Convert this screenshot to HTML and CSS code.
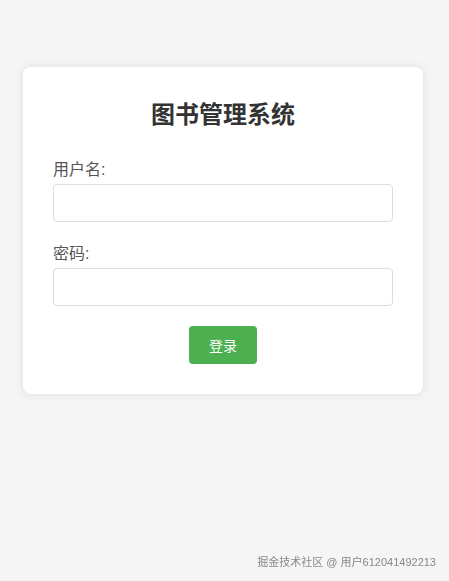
FILE: index.html
```html
<!DOCTYPE html>
<html lang="zh">
<head>
<meta charset="utf-8">
<title>图书管理系统</title>
<link rel="stylesheet" href="styles.css">
</head>
<body>
<div class="card">
  <h2 class="title">图书管理系统</h2>
  <form class="form">
    <div class="field">
      <label class="label">用户名:</label>
      <input class="input" type="text">
    </div>
    <div class="field">
      <label class="label">密码:</label>
      <input class="input" type="password">
    </div>
    <div class="actions">
      <button class="btn" type="button">登录</button>
    </div>
  </form>
</div>
<div class="watermark">掘金技术社区 @ 用户612041492213</div>
</body>
</html>
```
FILE: styles.css
```css
html, body {
  margin: 0;
  padding: 0;
}
body {
  background: #f5f5f5;
  font-family: "Liberation Sans", "Noto Sans CJK SC", sans-serif;
  min-height: 581px;
  padding: 67px 3px 0 0;
  box-sizing: border-box;
}
.card {
  width: 400px;
  margin: 0 auto;
  background: #fff;
  border-radius: 8px;
  box-shadow: 0 0 10px rgba(0, 0, 0, 0.1);
  padding: 30px;
  box-sizing: border-box;
}
.title {
  margin: 0 0 25px;
  text-align: center;
  font-size: 24px;
  line-height: 36px;
  font-weight: bold;
  color: #333;
}
.form {
  display: flex;
  flex-direction: column;
}
.field {
  display: flex;
  flex-direction: column;
  margin-bottom: 20px;
}
.label {
  font-size: 16px;
  line-height: 24px;
  color: #555;
  margin-bottom: 2px;
}
.input {
  height: 38px;
  box-sizing: border-box;
  border: 1px solid #ddd;
  border-radius: 4px;
  padding: 10px;
  font-size: 14px;
  outline: none;
}
.actions {
  display: flex;
  justify-content: center;
}
.btn {
  background: #4caf50;
  color: #fff;
  border: none;
  border-radius: 4px;
  height: 38px;
  padding: 0 20px;
  font-size: 14px;
  font-family: inherit;
}
.watermark {
  position: fixed;
  right: 13px;
  bottom: 12px;
  font-size: 11px;
  color: #888;
}
```
